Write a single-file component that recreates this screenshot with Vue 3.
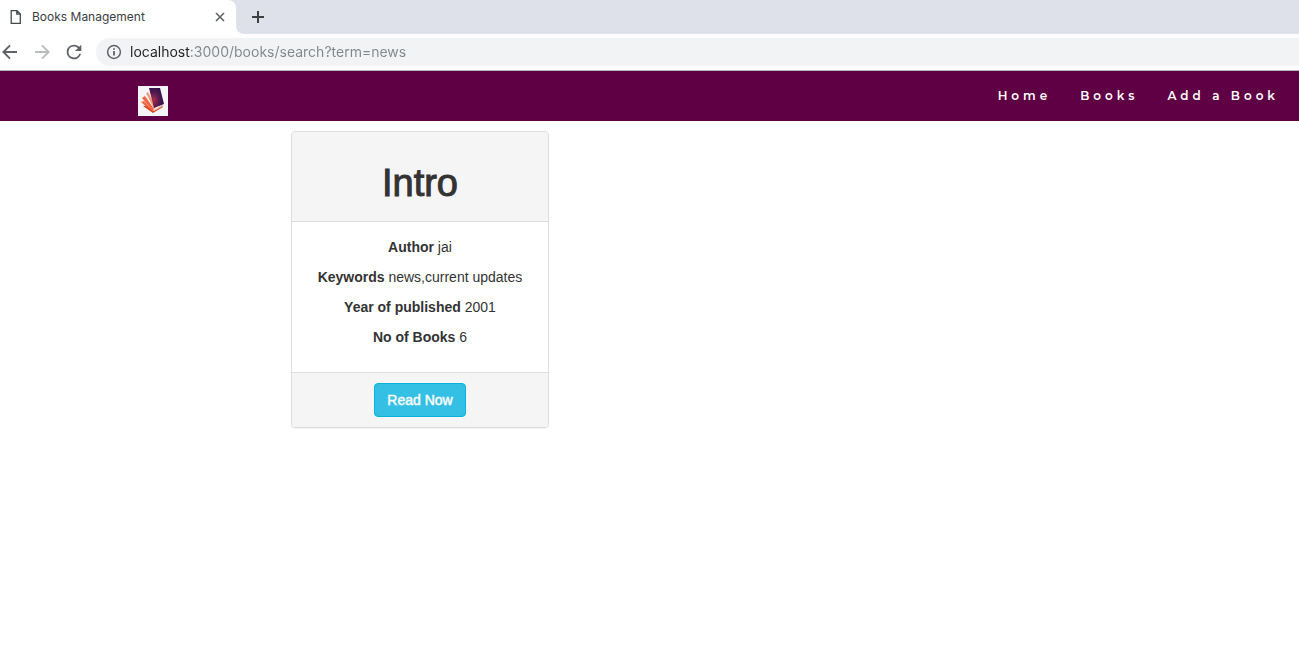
<script setup>
import { ref } from 'vue'

const address = ref('localhost:3000/books/search?term=news')
const links = ['Home', 'Books', 'Add a Book']
const book = {
  title: 'Intro',
  details: [
    { label: 'Author', value: 'jai' },
    { label: 'Keywords', value: 'news,current updates' },
    { label: 'Year of published', value: '2001' },
    { label: 'No of Books', value: '6' }
  ]
}
</script>

<template>
  <div class="window">
    <header class="browser">
      <div class="tabs">
        <div class="tab">
          <svg class="file" width="12" height="16" viewBox="0 0 12 16" fill="none" stroke="#45494d" stroke-width="1.3">
            <path d="M1.2 1.7H7L10.3 5V14.3H1.2ZM6.8 1.7V5.2H10.3" />
          </svg>
          <span class="tab-title">Books Management</span>
          <button class="icon-button" type="button" aria-label="Close tab">
            <svg width="10" height="10" viewBox="0 0 10 10" stroke="#5f6368" stroke-width="1.6">
              <path d="M1 1L9 9M9 1L1 9" />
            </svg>
          </button>
        </div>
        <div class="strip">
          <button class="icon-button" type="button" aria-label="New tab">
            <svg width="12" height="12" viewBox="0 0 12 12" stroke="#3c4043" stroke-width="2">
              <path d="M0 6H12M6 0V12" />
            </svg>
          </button>
        </div>
      </div>
      <div class="toolbar">
        <button class="icon-button" type="button" aria-label="Back">
          <svg width="24" height="24" viewBox="0 0 24 24" fill="#5f6368">
            <path d="M18 11H6.83l4.9-4.9L10.3 4.7 3 12l7.3 7.3 1.4-1.4L6.83 13H18z" />
          </svg>
        </button>
        <button class="icon-button" type="button" aria-label="Forward">
          <svg width="24" height="24" viewBox="0 0 24 24" fill="#babcbe">
            <path d="M4 11h11.17l-4.9-4.9 1.43-1.4L19 12l-7.3 7.3-1.4-1.4 4.87-4.9H4z" />
          </svg>
        </button>
        <button class="icon-button" type="button" aria-label="Reload">
          <svg width="22" height="22" viewBox="0 0 24 24" fill="#5f6368">
            <path d="M17.65 6.35A7.96 7.96 0 0 0 12 4a8 8 0 1 0 7.73 10h-2.08A6 6 0 1 1 12 6c1.66 0 3.14.69 4.22 1.78L13 11h7V4z" />
          </svg>
        </button>
        <label class="omnibox">
          <svg width="16" height="16" viewBox="0 0 16 16" fill="none" stroke="#5f6368">
            <circle cx="8" cy="8" r="6.4" stroke-width="1.5" />
            <path d="M8 7V11.6M8 4.2V5.8" stroke-width="1.8" />
          </svg>
          <input v-model="address" class="address" type="text" aria-label="Address" spellcheck="false" />
        </label>
      </div>
    </header>

    <nav class="navbar">
      <a class="brand" href="#" aria-label="Books home">
        <svg width="30" height="30" viewBox="0 0 30 30">
          <rect width="30" height="30" fill="#f5f4f6" />
          <path d="M8 7L10 6 18 21 16 23Z" fill="#f39a7c" />
          <path d="M4 12L7 10 16 23 15 25Z" fill="#f0673f" />
          <path d="M3 16L6 15 15 24 14 26Z" fill="#ef6a45" />
          <path d="M5 20L8 20 15 25 24 19 25 21 15 27Z" fill="#d9461f" />
          <path d="M16 24L24 19 25 20 16 25Z" fill="#f3c9bc" />
          <path d="M11 2L22 2 26 18 16 22Z" fill="url(#cover)" />
          <defs>
            <radialGradient id="cover" cx="0.3" cy="0.6" r="0.75">
              <stop offset="0" stop-color="#a53048" />
              <stop offset="0.5" stop-color="#571a50" />
              <stop offset="1" stop-color="#230e4b" />
            </radialGradient>
          </defs>
        </svg>
      </a>
      <ul class="links">
        <li v-for="link in links" :key="link"><a href="#">{{ link }}</a></li>
      </ul>
    </nav>

    <main class="content">
      <article class="card">
        <header class="card-head"><h1>{{ book.title }}</h1></header>
        <div class="card-body">
          <p v-for="item in book.details" :key="item.label">
            <strong>{{ item.label }}</strong> {{ item.value }}
          </p>
        </div>
        <footer class="card-foot"><button class="read" type="button">Read Now</button></footer>
      </article>
    </main>
  </div>
</template>

<style>
body {
  background: #fff;
}
</style>

<style scoped>
* {
  box-sizing: border-box;
}
.window {
  font-family: "Liberation Sans", Arial, sans-serif;
  color: #333;
}
.browser {
  font-family: Inter, Roboto, sans-serif;
  border-bottom: 1px solid #b5b5b7;
}
.icon-button {
  display: flex;
  padding: 0;
  border: 0;
  background: none;
}
.tabs {
  display: flex;
  height: 34px;
  background: linear-gradient(#dee1e9 0 16px, #fff 16px);
}
.tab {
  display: flex;
  align-items: center;
  width: 236px;
  padding: 0 11px 0 10px;
  background: #fff;
  border-top-right-radius: 8px;
}
.tab-title {
  flex: 1;
  margin-left: 10px;
  font-size: 12px;
  line-height: 16px;
  color: #3c4043;
}
.strip {
  display: flex;
  flex: 1;
  align-items: center;
  padding-left: 16px;
  background: #dee1e9;
  border-bottom-left-radius: 8px;
}
.toolbar {
  display: flex;
  align-items: center;
  gap: 8px;
  height: 36px;
  margin-left: -1px;
}
.omnibox {
  display: flex;
  flex: 1;
  align-items: center;
  gap: 8px;
  height: 28px;
  margin-left: 3px;
  padding-left: 10px;
  background: #f1f3f4;
  border-radius: 14px 0 0 14px;
}
.address {
  flex: 1;
  min-width: 0;
  padding: 0;
  border: 0;
  outline: 0;
  font-family: inherit;
  font-size: 14px;
  line-height: 20px;
  color: transparent;
  caret-color: #202124;
  background: linear-gradient(90deg, #202124 60px, #80868b 60px);
  background-clip: text;
}
.navbar {
  display: flex;
  align-items: flex-start;
  justify-content: space-between;
  min-height: 50px;
  padding: 15px 20px 0 138px;
  background: #5e0043;
}
.brand {
  display: flex;
}
.links {
  display: flex;
  gap: 29px;
  margin: 0;
  padding: 0;
  list-style: none;
}
.links a {
  display: block;
  font-family: Montserrat, Inter, sans-serif;
  font-size: 12px;
  font-weight: 600;
  line-height: 20px;
  letter-spacing: 4px;
  color: #fff;
  text-decoration: none;
}
.content {
  padding: 10px 16px 24px 22.4%;
}
.card {
  width: 258px;
  border: 1px solid #ddd;
  border-radius: 4px;
  box-shadow: 0 1px 1px rgba(0, 0, 0, 0.05);
  font-size: 14px;
  line-height: 20px;
  text-align: center;
  overflow: hidden;
}
.card-head {
  padding: 31px 15px 18px;
  background: #f5f5f5;
  border-bottom: 1px solid #ddd;
}
h1 {
  margin: 0;
  font-size: 38px;
  font-weight: 500;
  line-height: 40px;
  -webkit-text-stroke: 1px #333;
}
.card-body {
  padding: 15px 15px 25px;
}
.card-body p {
  margin: 0 0 10px;
}
.card-body p:last-child {
  margin: 0;
}
.card-foot {
  padding: 10px 15px;
  background: #f5f5f5;
  border-top: 1px solid #ddd;
}
.read {
  padding: 6px 12px;
  border: 1px solid #08b2da;
  border-radius: 4px;
  background: #33c0e4;
  color: #fff;
  font-family: inherit;
  font-size: 14px;
  line-height: 20px;
  -webkit-text-stroke: 1px rgba(255, 255, 255, 0.5);
}
</style>
